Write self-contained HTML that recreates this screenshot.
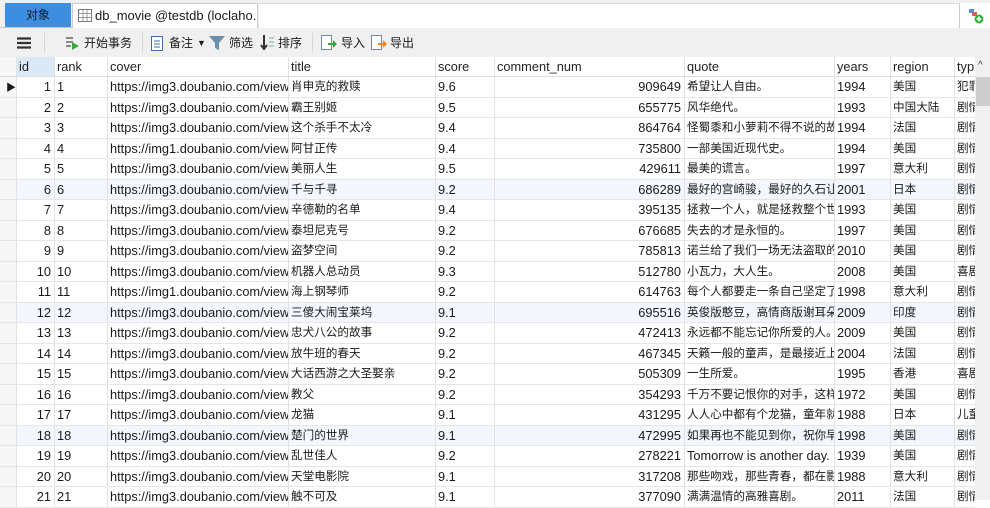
<!DOCTYPE html>
<html><head><meta charset="utf-8"><style>
*{margin:0;padding:0;box-sizing:border-box}
body{width:990px;height:500px;overflow:hidden;background:#fff;font-family:"Liberation Sans","Noto Sans CJK SC",sans-serif;font-size:12px;color:#1a1a1a;position:relative}
.tabbar{position:absolute;left:0;top:0;width:990px;height:28px;background:#f0f0f0;border-bottom:1px solid #c8c8c8}
.t1{position:absolute;left:5px;top:3px;width:66px;height:24px;background:#3d8ee0;color:#1a1a1a;text-align:center;line-height:24px;font-size:12px}
.t2{position:absolute;left:72px;top:3px;width:186px;height:25px;background:#fff;border:1px solid #ccc;border-bottom:none;line-height:23px;padding-left:22px;font-size:13px;white-space:nowrap;overflow:hidden}
.t3{position:absolute;left:259px;top:3px;width:700px;height:25px;background:#fff;border-top:1px solid #ddd}
.t4{position:absolute;left:959px;top:3px;width:31px;height:25px;background:#fff;border-left:1px solid #ccc}
.tool{position:absolute;left:0;top:28px;width:990px;height:29px;background:#f0f0f0}
.ti{position:absolute;top:7px;font-size:12px;line-height:16px}
.sep{position:absolute;top:5px;width:1px;height:20px;background:#d6d6d6}
.grid{position:absolute;left:0;top:57px;width:975px;height:443px;font-size:12.8px}
.row{position:absolute;left:0;width:975px;height:20.5px;border-bottom:1px solid #e6e6e6}
.c{position:absolute;top:0;height:100%;line-height:20px;white-space:nowrap;overflow:hidden;border-right:1px solid #e2e2e2;padding-left:2px}
.r{text-align:right;padding-right:3px;padding-left:0}
.k{font-size:11.6px}
.hd .c{color:#222;font-size:12.8px}
.sb{position:absolute;left:975px;top:57px;width:15px;height:443px;background:#f0f0f0}
.thumb{position:absolute;left:976px;top:77px;width:14px;height:29px;background:#cdcdcd}
</style></head><body>
<div class="tabbar">
<div class="t1">对象</div>
<div class="t2"><svg style="position:absolute;left:5px;top:5px" width="14" height="13"><rect x=".5" y=".5" width="13" height="12" fill="#fff" stroke="#777"/><path d="M.5 4.5h13M.5 8.5h13M5 .5v12M9 .5v12" stroke="#999"/></svg>db_movie @testdb (loclaho...</div>
<div class="t3"></div>
<div class="t4"><svg style="position:absolute;left:8px;top:5px" width="16" height="16"><rect x="1" y="1" width="5" height="4" fill="#5a8fd0"/><rect x="4" y="4" width="5" height="4" fill="#e05a5a"/><circle cx="11" cy="11" r="4.5" fill="#3ab03a"/><path d="M11 8.5v5M8.5 11h5" stroke="#fff" stroke-width="1.5"/></svg></div>
</div>
<div class="tool">
<svg style="position:absolute;left:17px;top:9px" width="14" height="12"><path d="M0 1.5h14M0 6h14M0 10.5h14" stroke="#333" stroke-width="2.2"/></svg>
<div class="sep" style="left:44px"></div>
<svg style="position:absolute;left:65px;top:8px" width="14" height="14"><rect x="1" y="1" width="7" height="2" fill="#888"/><rect x="1" y="5" width="7" height="2" fill="#888"/><rect x="1" y="9" width="5" height="2" fill="#888"/><path d="M7 6l7 4-7 4z" fill="#3aa83a"/></svg>
<div class="ti" style="left:84px">开始事务</div>
<div class="sep" style="left:142px"></div>
<svg style="position:absolute;left:151px;top:8px" width="12" height="15"><rect x=".5" y=".5" width="11" height="14" fill="#fff" stroke="#3a6ea8"/><path d="M3 5h6M3 8h6M3 11h6" stroke="#3a6ea8"/></svg>
<div class="ti" style="left:169px">备注</div>
<div class="ti" style="left:197px;font-size:9px">▼</div>
<svg style="position:absolute;left:209px;top:8px" width="16" height="14"><path d="M0 0h16l-6 7v7l-4-2V7z" fill="#6f8fa8"/></svg>
<div class="ti" style="left:229px">筛选</div>
<svg style="position:absolute;left:260px;top:7px" width="14" height="16"><path d="M4 0v13M1 10l3 4 3-4" stroke="#333" stroke-width="2" fill="none"/><path d="M9 3h5M9 7h5M9 11h5" stroke="#7a9" /></svg>
<div class="ti" style="left:278px">排序</div>
<div class="sep" style="left:312px"></div>
<svg style="position:absolute;left:321px;top:7px" width="16" height="16"><rect x=".5" y=".5" width="10" height="14" fill="#fff" stroke="#7a8a9a"/><path d="M7 8h5V5l4 4-4 4v-3H7z" fill="#3aa83a"/></svg>
<div class="ti" style="left:341px">导入</div>
<svg style="position:absolute;left:371px;top:7px" width="16" height="16"><rect x=".5" y=".5" width="10" height="14" fill="#fff" stroke="#7a8a9a"/><path d="M7 8h5V5l4 4-4 4v-3H7z" fill="#f08a1a"/></svg>
<div class="ti" style="left:390px">导出</div>
</div>
<div class="grid" id="g"></div>
<div class="sb"></div>
<div class="thumb"></div>
<div style="position:absolute;left:978px;top:60px;font-size:10px;color:#333">^</div>
<script>
var cols=[[0,17],[17,55],[55,108],[108,289],[289,436],[436,495],[495,685],[685,835],[835,891],[891,955],[955,975]];
var d=[
[1,3,"肖申克的救赎","9.6",909649,"希望让人自由。",1994,"美国","犯罪"],
[2,3,"霸王别姬","9.5",655775,"风华绝代。",1993,"中国大陆","剧情"],
[3,3,"这个杀手不太冷","9.4",864764,"怪蜀黍和小萝莉不得不说的故",1994,"法国","剧情"],
[4,1,"阿甘正传","9.4",735800,"一部美国近现代史。",1994,"美国","剧情"],
[5,3,"美丽人生","9.5",429611,"最美的谎言。",1997,"意大利","剧情"],
[6,3,"千与千寻","9.2",686289,"最好的宫崎骏，最好的久石让",2001,"日本","剧情"],
[7,3,"辛德勒的名单","9.4",395135,"拯救一个人，就是拯救整个世",1993,"美国","剧情"],
[8,3,"泰坦尼克号","9.2",676685,"失去的才是永恒的。",1997,"美国","剧情"],
[9,3,"盗梦空间","9.2",785813,"诺兰给了我们一场无法盗取的",2010,"美国","剧情"],
[10,3,"机器人总动员","9.3",512780,"小瓦力，大人生。",2008,"美国","喜剧"],
[11,1,"海上钢琴师","9.2",614763,"每个人都要走一条自己坚定了",1998,"意大利","剧情"],
[12,3,"三傻大闹宝莱坞","9.1",695516,"英俊版憨豆，高情商版谢耳朵",2009,"印度","剧情"],
[13,3,"忠犬八公的故事","9.2",472413,"永远都不能忘记你所爱的人。",2009,"美国","剧情"],
[14,3,"放牛班的春天","9.2",467345,"天籁一般的童声，是最接近上",2004,"法国","剧情"],
[15,3,"大话西游之大圣娶亲","9.2",505309,"一生所爱。",1995,"香港","喜剧"],
[16,3,"教父","9.2",354293,"千万不要记恨你的对手，这样",1972,"美国","剧情"],
[17,3,"龙猫","9.1",431295,"人人心中都有个龙猫，童年就",1988,"日本","儿童"],
[18,3,"楚门的世界","9.1",472995,"如果再也不能见到你，祝你早",1998,"美国","剧情"],
[19,3,"乱世佳人","9.2",278221,"Tomorrow is another day.",1939,"美国","剧情"],
[20,3,"天堂电影院","9.1",317208,"那些吻戏，那些青春，都在影",1988,"意大利","剧情"],
[21,3,"触不可及","9.1",377090,"满满温情的高雅喜剧。",2011,"法国","剧情"]];
function cell(i,t,cls,extra){var c=cols[i];return '<div class="c '+(cls||'')+'" style="left:'+c[0]+'px;width:'+(c[1]-c[0])+'px;'+(extra||'')+'">'+t+'</div>';}
var h='<div class="row hd" style="top:0;height:20px;border-bottom:1px solid #ddd">'+cell(0,'','','background:#f7f7f7')+cell(1,'id','','background:#dbe8f6')+cell(2,'rank')+cell(3,'cover')+cell(4,'title')+cell(5,'score')+cell(6,'comment_num')+cell(7,'quote')+cell(8,'years')+cell(9,'region')+cell(10,'typ','','border-right:none')+'</div>';
d.forEach(function(r,k){var top=20+k*20.5;var bg=(r[0]%6==0)?'#f3f7fd':'#fff';
var qk=/^[A-Z]/.test(r[5])?'':'k';
h+='<div class="row" style="top:'+top+'px;background:'+bg+'">'+cell(0,k==0?'<span style="font-size:10px;padding-left:4px">&#9654;</span>':'','','background:#f7f7f7')+cell(1,r[0],'r')+cell(2,r[0])+cell(3,'https://img'+r[1]+'.doubanio.com/view/photo/s_ratio')+cell(4,r[2],'k')+cell(5,r[3])+cell(6,r[4],'r')+cell(7,r[5],qk)+cell(8,r[6])+cell(9,r[7],'k')+cell(10,r[8],'k','border-right:none')+'</div>';});
document.getElementById('g').innerHTML=h;
</script>
</body></html>
